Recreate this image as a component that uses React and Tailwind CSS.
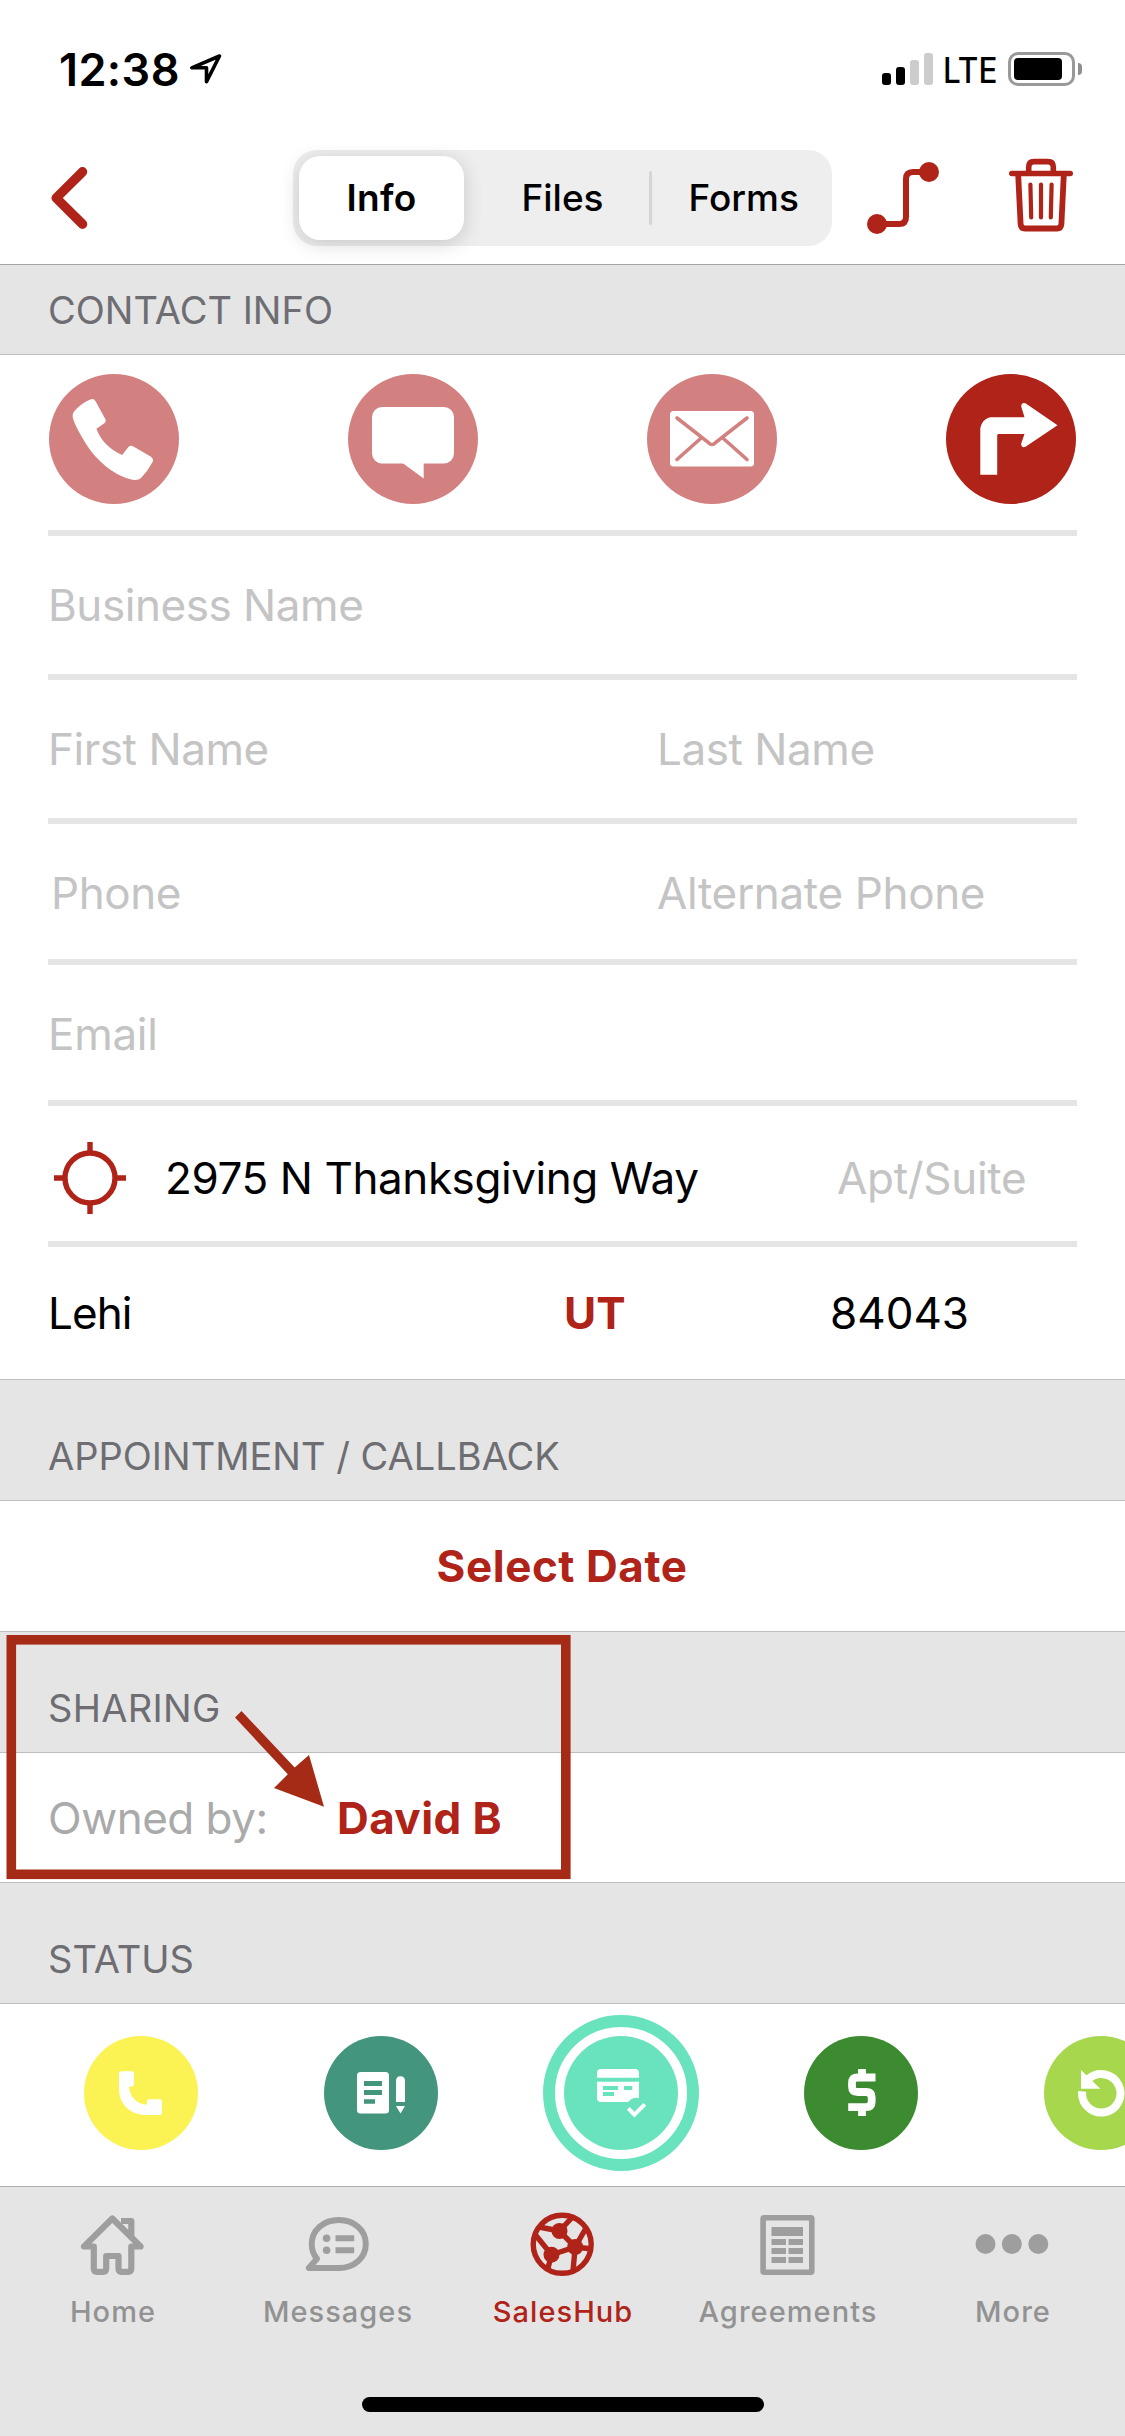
import { useState } from 'react';

const segments = ['Info', 'Files', 'Forms'];

const contactActions = [
  { id: 'call', color: 'text-[#d38180]', Icon: PhoneIcon },
  { id: 'message', color: 'text-[#d38180]', Icon: ChatIcon },
  { id: 'mail', color: 'text-[#d38180]', Icon: MailIcon },
  { id: 'directions', color: 'text-[#af2318]', Icon: TurnIcon },
];

const statuses = [
  { id: 'callback', color: 'text-[#fbf253]', Icon: StatusPhone },
  { id: 'proposal', color: 'text-[#43957d]', Icon: StatusNote },
  { id: 'approved', color: 'text-[#69e3be]', Icon: StatusCard },
  { id: 'sold', color: 'text-[#3d8b30]', Icon: StatusDollar },
  { id: 'retry', color: 'text-[#a6d74d]', Icon: StatusRetry },
];

const tabs = [
  { label: 'Home', Icon: HomeIcon },
  { label: 'Messages', Icon: MessagesIcon },
  { label: 'SalesHub', Icon: HubIcon },
  { label: 'Agreements', Icon: AgreementsIcon },
  { label: 'More', Icon: MoreIcon },
];

/* ---------- contact action icons (130x130, circle uses currentColor) ---------- */

function PhoneIcon() {
  return (
    <svg width="130" height="130" viewBox="0 0 130 130">
      <circle cx="65" cy="65" r="65" fill="currentColor" />
      <path fill="#fff" d="M42 25.2Q45 24.4 46.4 27L56.3 45Q57.6 47.4 55.4 49.2L47.4 54.7Q54 72.5 73.2 81L79.4 73Q81.3 71 84 72.2L101.6 82.6Q105 84.8 103.6 88Q98.5 97.5 92 104Q89.5 106.4 85 106C66 102.5 50 88 40.5 75C31 61 25.5 50 23.9 44Q23 40 25.5 37C30 31.5 36 27.5 42 25.2Z" />
    </svg>
  );
}

function ChatIcon() {
  return (
    <svg width="130" height="130" viewBox="0 0 130 130">
      <circle cx="65" cy="65" r="65" fill="currentColor" />
      <rect x="24" y="33" width="82" height="56.5" rx="10" fill="#fff" />
      <path fill="#fff" d="M54.5 89L75.7 104.5V89Z" />
    </svg>
  );
}

function MailIcon() {
  return (
    <svg width="130" height="130" viewBox="0 0 130 130">
      <circle cx="65" cy="65" r="65" fill="currentColor" />
      <rect x="23" y="37" width="84" height="55.5" rx="3.5" fill="#fff" />
      <g fill="none" stroke="currentColor" strokeWidth="3.6" strokeLinecap="round">
        <path d="M30 44L61.5 68.7Q65 72.2 68.5 68.7L100 44" />
        <path d="M30 85.5L53.6 64.5M100 85.5L76.4 64.5" />
      </g>
    </svg>
  );
}

function TurnIcon() {
  return (
    <svg width="130" height="130" viewBox="0 0 130 130">
      <circle cx="65" cy="65" r="65" fill="currentColor" />
      <path fill="#fff" d="M34.3 100.7V54Q36 45.5 44 43.3H78.5L75.2 32.5Q75.2 28 79.5 29.2L111.5 51.3L79.5 72.8Q75.2 74.5 75.2 69.5L78.5 60H52.2L51.2 61V100.7Z" />
    </svg>
  );
}

/* ---------- status icons (114x114) ---------- */

function StatusPhone() {
  return <path fill="#fff" d="M37 35.3H48Q50 35.3 50 37.3V49L48 50.7H45Q46.5 65 60 68.5H62.8V65Q63.3 63.3 65 63.3H76Q78 63.3 78 65.3V77Q78 79 76 79H61C45 78.5 35 67 35 53V37.3Q35 35.3 37 35.3Z" />;
}

function StatusNote() {
  return (
    <g>
      <rect x="33" y="36" width="32" height="41.5" rx="3.5" fill="#fff" />
      <path fill="currentColor" d="M40 45h18v5H40zM40 54h18v5H40zM40 63.3h11v4.5H40z" />
      <path fill="#fff" d="M72 66V45Q72 40.3 76.5 40.3T81 45V66ZM72 70H81L76.5 77.5Z" />
    </g>
  );
}

function StatusCard() {
  return (
    <g>
      <rect x="33" y="33" width="42" height="33" rx="4" fill="#fff" />
      <path fill="currentColor" d="M33 41.7h42v4H33zM39 50h15v4H39zM60 50h8.3v4H60zM39 56h11v4H39z" />
      <circle cx="73" cy="73" r="11.2" fill="currentColor" />
      <path d="M64.3 72.3L70.4 78.6L80.8 68.3" fill="none" stroke="#fff" strokeWidth="4" />
    </g>
  );
}

function StatusDollar() {
  return (
    <g fill="none" stroke="#fff" strokeWidth="7.8">
      <path d="M71.5 41.5H54Q48 41.5 48 47V50.5Q48 56 54 56H62Q67.7 56 67.7 61.5V65.5Q67.7 71.2 62 71.2H44.2" />
      <path d="M58 33V40M58 73V80" />
    </g>
  );
}

function StatusRetry() {
  return (
    <g>
      <path d="M38.2 55.3A19.2 19.2 0 1 0 44.5 43" fill="none" stroke="#fff" strokeWidth="8" />
      <path d="M37 34V52.8H56.3Z" fill="#fff" />
    </g>
  );
}

/* ---------- tab bar icons (72x72) ---------- */

function HomeIcon() {
  return (
    <g fill="none" stroke="currentColor" strokeWidth="6.2" strokeLinejoin="round">
      <path d="M35.3 10.5L7 38.5H16.8V60.5Q16.8 63.8 20 63.8H26Q29.2 63.8 29.2 60.5V48H41.5V60.5Q41.5 63.8 44.7 63.8H51Q54.3 63.8 54.3 60.5V38.5H63.6Z" />
      <path d="M44 13H54.3V29" />
    </g>
  );
}

function MessagesIcon() {
  return (
    <g fill="currentColor">
      <path d="M6.8 60H36.8C52 60 63.8 50 63.8 36S52 12 36.8 12S9.7 22 9.7 36Q9.7 44.5 15 50.8Z" fill="none" stroke="currentColor" strokeWidth="6" strokeLinejoin="round" />
      <circle cx="24.6" cy="30.2" r="3.8" />
      <circle cx="24.6" cy="42.2" r="3.8" />
      <path d="M33.5 27.2h18.7v6H33.5zM33.5 39.2h18.7v6H33.5z" />
    </g>
  );
}

function HubIcon() {
  return (
    <g fill="none" stroke="currentColor" strokeWidth="5.4">
      <circle cx="35.2" cy="36.3" r="29" />
      <path d="M12 19L32.5 23L44.5 10M32.5 23L48.2 39L24.5 46.7L8.5 27M24.5 46.7L21 60M59 20L48.2 39L65 41M48.2 39L46 63" />
      <g fill="currentColor" stroke="none">
        <circle cx="32.5" cy="23" r="8" />
        <circle cx="24.5" cy="46.7" r="8" />
        <circle cx="48.2" cy="39" r="8" />
      </g>
    </g>
  );
}

function AgreementsIcon() {
  return (
    <g fill="currentColor">
      <rect x="11.1" y="9.8" width="48.7" height="54.4" rx="1" fill="none" stroke="currentColor" strokeWidth="5.6" />
      <path d="M19.5 19H51v9H19.5zM19.5 31H34v6H19.5zM36.5 31H51v6H36.5zM19.5 40H34v6H19.5zM36.5 40H51v6H36.5zM19.5 49H34v6H19.5zM36.5 49H51v6H36.5z" />
    </g>
  );
}

function MoreIcon() {
  return (
    <g fill="currentColor">
      <circle cx="8.5" cy="36" r="10" />
      <circle cx="34.8" cy="36" r="10" />
      <circle cx="61.3" cy="36" r="10" />
    </g>
  );
}

/* ---------- layout pieces ---------- */

function StatusBar() {
  return (
    <div className="h-[138px] pl-[59px] pr-[43px] flex items-center justify-between">
      <div className="flex items-center">
        <span className="text-[45px] leading-none font-semibold tracking-[0.4px]">12:38</span>
        <svg className="ml-[9px]" width="34" height="34" viewBox="0 0 34 34" fill="none" stroke="#000" strokeWidth="3.6" strokeLinejoin="round">
          <path d="M30.5 4L2.8 15.8H17.5V29.8Z" />
        </svg>
      </div>
      <div className="flex items-center">
        <div className="flex items-end gap-[5px] h-8">
          <div className="w-[9px] h-3 rounded-[3px] bg-black" />
          <div className="w-[9px] h-[18px] rounded-[3px] bg-black" />
          <div className="w-[9px] h-[25px] rounded-[3px] bg-[#cccccc]" />
          <div className="w-[9px] h-8 rounded-[3px] bg-[#cccccc]" />
        </div>
        <span className="ml-[10px] w-[65px] mt-[3px] text-[35px] leading-none font-medium origin-left scale-x-[0.9]">LTE</span>
        <div className="w-[67px] h-[34px] border-[3px] border-[#999999] rounded-[10px] p-[3px]">
          <div className="w-12 h-full rounded-[4px] bg-black" />
        </div>
        <div className="ml-[3px] w-1 h-3 rounded-r-full bg-[#8f8f8f]" />
      </div>
    </div>
  );
}

function NavBar({ active, onChange }) {
  return (
    <div className="h-[127px] pl-[51px] pr-[52px] pb-[7px] flex items-center border-b border-[#a2a2a2]">
      <button className="w-[242px] text-[#af2318]">
        <svg width="37" height="64" viewBox="0 0 37 64" fill="none" stroke="currentColor" strokeWidth="9.5" strokeLinecap="round" strokeLinejoin="round">
          <path d="M31.5 5.8L5.2 32L31.5 58.2" />
        </svg>
      </button>
      <div className="w-[539px] h-24 py-[6px] flex items-center rounded-[24px] bg-[#eeeeee] text-[37px]">
        {segments.map((s, i) => (
          <div key={s} className="flex flex-1 items-center h-full">
            <button
              onClick={() => onChange(s)}
              className={s === active
                ? 'ml-[6px] w-[165px] h-full rounded-[21px] bg-white font-semibold tracking-[0.3px] shadow-[0_4px_20px_rgba(0,0,0,0.16)]'
                : 'flex-1 h-full pl-[3px] font-medium'}
            >
              {s}
            </button>
            {i === 1 && <div className="w-[3px] h-[54px] rounded-full bg-[#d5d5d5]" />}
          </div>
        ))}
      </div>
      <svg className="ml-[34px] text-[#af2318]" width="74" height="74" viewBox="0 0 74 74">
        <path d="M11 63H33Q40 63 40 56V18Q40 11 47 11H63" fill="none" stroke="currentColor" strokeWidth="6" />
        <circle cx="11" cy="63" r="10" fill="currentColor" />
        <circle cx="63" cy="11" r="10" fill="currentColor" />
      </svg>
      <svg className="ml-auto mb-[5px] text-[#af2318]" width="64" height="74" viewBox="0 0 64 74" fill="none" stroke="currentColor" strokeLinecap="round" strokeLinejoin="round">
        <path d="M2.8 15.5H61.2" strokeWidth="5.6" />
        <path d="M19.7 15V9Q19.7 3.6 25 3.6H39Q44.3 3.6 44.3 9V15" strokeWidth="5.6" />
        <path d="M9.2 17L11.6 66Q11.9 70.5 16 70.5H48Q52.1 70.5 52.4 66L54.8 17" strokeWidth="5.8" />
        <path d="M21.4 26.5L22.2 59.5M32 26.5V59.5M42.6 26.5L41.8 59.5" strokeWidth="4.2" />
      </svg>
    </div>
  );
}

function SectionHeader({ children }) {
  return (
    <div className="h-[122px] pl-12 pb-[25px] flex items-end bg-[#e5e5e5] border-y border-[#bebebe] text-[38px] leading-none text-[#6d6d72]">
      {children}
    </div>
  );
}

function Placeholder({ children, className = '' }) {
  return <span className={`text-[#c4c4c4] ${className}`}>{children}</span>;
}

export default function App() {
  const [segment, setSegment] = useState('Info');
  const [tab, setTab] = useState('SalesHub');
  const [status, setStatus] = useState('approved');

  return (
    <div className="w-[1125px] h-[2436px] overflow-hidden flex flex-col bg-white text-black font-['Inter','Liberation_Sans',sans-serif]">
      <StatusBar />
      <NavBar active={segment} onChange={setSegment} />

      <div className="h-[90px] pl-12 pt-px flex items-center bg-[#e5e5e5] border-b border-[#bebebe] text-[38px] text-[#6d6d72]">
        CONTACT INFO
      </div>

      <div className="mx-12 text-[44px] leading-none tracking-[-0.45px]">
        <div className="h-[181px] pt-[19px] px-px flex items-start justify-between border-b-6 border-[#e5e5e5]">
          {contactActions.map(({ id, color, Icon }) => (
            <button key={id} className={color}><Icon /></button>
          ))}
        </div>
        <div className="h-36 flex items-center border-b-6 border-[#e5e5e5]">
          <Placeholder>Business Name</Placeholder>
        </div>
        <div className="h-36 flex items-center border-b-6 border-[#e5e5e5]">
          <Placeholder className="w-[609px]">First Name</Placeholder>
          <Placeholder>Last Name</Placeholder>
        </div>
        <div className="h-[141px] pt-[3px] flex items-center border-b-6 border-[#e5e5e5]">
          <Placeholder className="w-[609px] pl-[3px]">Phone</Placeholder>
          <Placeholder className="tracking-[-0.35px]">Alternate Phone</Placeholder>
        </div>
        <div className="h-[141px] pt-[3px] flex items-center border-b-6 border-[#e5e5e5]">
          <Placeholder className="tracking-[-0.3px]">Email</Placeholder>
        </div>
        <div className="h-[141px] pt-[9px] flex items-center border-b-6 border-[#e5e5e5]">
          <svg className="ml-[6px] mr-[39px] text-[#af2318]" width="72" height="72" viewBox="0 0 72 72" fill="none" stroke="currentColor" strokeWidth="5.4">
            <circle cx="36" cy="36" r="25" />
            <path d="M36 0V10M36 62V72M0 36H10M62 36H72" />
          </svg>
          <span className="w-[672px] tracking-[-0.42px]">2975 N Thanksgiving Way</span>
          <Placeholder className="tracking-[-0.3px]">Apt/Suite</Placeholder>
        </div>
        <div className="h-[132px] flex items-center">
          <span className="w-[516px] tracking-[-0.9px]">Lehi</span>
          <span className="w-[266px] font-bold text-[#af2318] tracking-normal">UT</span>
          <span className="tracking-normal">84043</span>
        </div>
      </div>

      <SectionHeader>APPOINTMENT / CALLBACK</SectionHeader>
      <div className="h-[130px] pr-px flex items-center justify-center text-[44px] leading-none font-bold tracking-[0.55px] text-[#af2318]">
        Select Date
      </div>

      <div className="relative">
        <SectionHeader><span className="tracking-[0.3px]">SHARING</span></SectionHeader>
        <div className="h-[129px] pl-12 flex items-center text-[44px] leading-none">
          <span className="w-[289px] text-[#aaaaaa] tracking-[-0.5px]">Owned by:</span>
          <span className="font-bold tracking-[0.4px] text-[#af2318]">David B</span>
        </div>
        {/* callout drawn over the sharing rows */}
        <svg className="absolute left-0 top-0 text-[#a62b17]" width="580" height="251" viewBox="0 0 580 251">
          <rect x="11.3" y="8.8" width="554.5" height="234.5" fill="none" stroke="currentColor" strokeWidth="9.6" />
          <path fill="currentColor" d="M241.5 80L294.7 136.5L309 124L324 175.7L274 157L287.8 143.3L235 86.5Z" />
        </svg>
      </div>

      <SectionHeader>STATUS</SectionHeader>
      <div className="h-[182px] pl-[21px] pb-1 flex items-center overflow-hidden">
        {statuses.map(({ id, color, Icon }) => (
          <button key={id} onClick={() => setStatus(id)} className={`w-[240px] shrink-0 flex justify-center ${color}`}>
            <span className={id === status ? 'p-[9px] border-12 border-current rounded-full' : ''}>
              <svg width="114" height="114" viewBox="0 0 114 114">
                <circle cx="57" cy="57" r="57" fill="currentColor" />
                <Icon />
              </svg>
            </span>
          </button>
        ))}
      </div>

      <div className="h-[250px] flex flex-col items-center bg-[#e5e5e5] border-t border-[#b0b0b0]">
        <div className="w-full pt-[21px] grid grid-cols-5">
          {tabs.map(({ label, Icon }) => (
            <button
              key={label}
              onClick={() => setTab(label)}
              className={`flex flex-col items-center ${label === tab ? 'text-[#af2318]' : 'text-[#9e9e9e]'}`}
            >
              <svg width="72" height="72" viewBox="0 0 72 72" className="overflow-visible"><Icon /></svg>
              <span className={`mt-[17px] -mr-px text-[29px] leading-none font-medium tracking-[1.05px] ${label === tab ? '' : 'text-[#929292]'}`}>{label}</span>
            </button>
          ))}
        </div>
        <div className="mt-[71px] w-[402px] h-[15px] rounded-full bg-black" />
      </div>
    </div>
  );
}
